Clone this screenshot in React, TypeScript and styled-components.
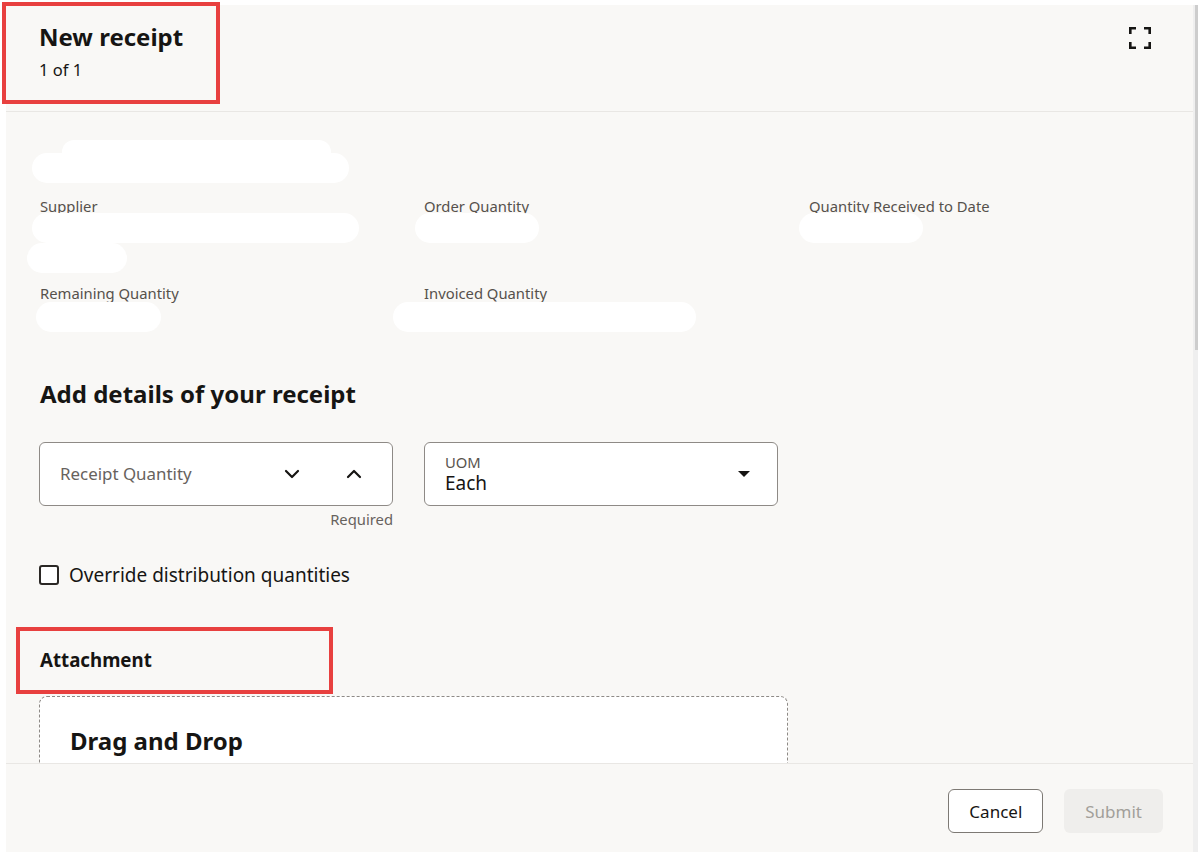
import styled, { createGlobalStyle } from "styled-components";

const GlobalStyle = createGlobalStyle`
  * { box-sizing: border-box; }
  html, body {
    margin: 0;
    padding: 0;
    background: #ffffff;
    font-family: "Noto Sans", "Open Sans", Arial, sans-serif;
    color: #161513;
  }
`;

const Page = styled.div`
  position: relative;
  display: flex;
  height: 852px;
  padding: 5px 0 0 6px;
  overflow: hidden;
`;

const Panel = styled.div`
  flex: 1;
  display: flex;
  flex-direction: column;
  background: #f9f8f6;
  min-width: 0;
`;

const ScrollTrack = styled.div`
  width: 5px;
  background: #efefef;
  display: flex;
  justify-content: flex-end;
`;

const ScrollThumb = styled.div`
  width: 3px;
  height: 345px;
  background: #cdcdcd;
`;

const Header = styled.header`
  height: 107px;
  flex-shrink: 0;
  display: flex;
  justify-content: space-between;
  align-items: flex-start;
  padding: 16px 42px 0 33px;
  border-bottom: 1px solid #e9e7e4;
`;

const Title = styled.h1`
  margin: 0;
  font-size: 24px;
  line-height: 32px;
  font-weight: 700;
`;

const SubTitle = styled.div`
  margin-top: 5px;
  font-size: 16.5px;
  line-height: 24px;
`;

const IconButton = styled.button`
  margin-top: 6px;
  width: 22px;
  height: 22px;
  padding: 0;
  border: 0;
  background: none;
  color: #161513;
`;

const Body = styled.main`
  flex: 1;
  overflow: hidden;
  padding: 18px 38px 0 33px;
`;

const Field = styled.div<{ $h: number }>`
  position: relative;
  height: ${(p) => p.$h}px;
  padding-left: 1px;
`;

const Grid = styled.div`
  display: grid;
  grid-template-columns: 384px 385px 1fr;
`;

const Label = styled.div`
  margin-top: -1px;
  font-size: 14.8px;
  line-height: 20px;
  color: #56514c;
`;

const Redact = styled.div<{ $x: number; $y: number; $w: number; $h?: number }>`
  position: absolute;
  left: ${(p) => p.$x}px;
  top: ${(p) => p.$y}px;
  width: ${(p) => p.$w}px;
  height: ${(p) => p.$h ?? 30}px;
  background: #ffffff;
  border-radius: 15px;
`;

const Heading = styled.h2`
  margin: 7px 0 0;
  padding-left: 1px;
  font-size: 24px;
  line-height: 32px;
  font-weight: 700;
`;

const InputRow = styled.div`
  display: flex;
  gap: 31px;
  margin-top: 32px;
`;

const InputCol = styled.div`
  width: 354px;
  display: flex;
  flex-direction: column;
  align-items: flex-end;
`;

const InputBox = styled.div`
  width: 100%;
  height: 64px;
  background: #ffffff;
  border: 1px solid #8e8a86;
  border-radius: 6px;
  display: flex;
  align-items: center;
  padding: 0 20px 0 20px;
`;

const Placeholder = styled.div`
  flex: 1;
  margin-top: -1px;
  font-size: 16.9px;
  color: #67625d;
`;

const Stepper = styled.div`
  display: flex;
  gap: 46px;
  margin-right: 10px;
  color: #161513;
`;

const SelectText = styled.div`
  flex: 1;
  display: flex;
  flex-direction: column;
`;

const SelectLabel = styled.div`
  font-size: 14.8px;
  line-height: 18px;
  color: #58534d;
`;

const SelectValue = styled.div`
  font-size: 19px;
  line-height: 24px;
`;

const Caret = styled.div`
  width: 0;
  height: 0;
  border-left: 6px solid transparent;
  border-right: 6px solid transparent;
  border-top: 6px solid #161513;
  margin-right: 7px;
`;

const Hint = styled.div`
  margin-top: 3px;
  font-size: 14.8px;
  line-height: 20px;
  color: #67625d;
`;

const CheckRow = styled.label`
  margin-top: 34px;
  display: flex;
  align-items: center;
  gap: 10px;
  font-size: 19px;
  line-height: 24px;
`;

const CheckBox = styled.span`
  width: 20px;
  height: 20px;
  border: 2px solid #2b2825;
  border-radius: 3px;
  background: #ffffff;
`;

const SectionTitle = styled.h3`
  margin: 61px 0 0;
  padding-left: 1px;
  font-size: 18.7px;
  line-height: 24px;
  font-weight: 700;
`;

const DropZone = styled.div`
  margin-top: 24px;
  width: 749px;
  height: 120px;
  background: #ffffff;
  border: 1px dashed #8e8a86;
  border-radius: 8px;
  padding: 28px 0 0 30px;
`;

const DropTitle = styled.div`
  font-size: 24px;
  line-height: 32px;
  font-weight: 700;
`;

const Footer = styled.footer`
  height: 89px;
  flex-shrink: 0;
  border-top: 1px solid #e9e7e4;
  display: flex;
  justify-content: flex-end;
  align-items: flex-start;
  gap: 21px;
  padding: 25px 30px 0 0;
  background: #f9f8f6;
`;

const Button = styled.button<{ $disabled?: boolean }>`
  height: 44px;
  padding: 0 20px;
  border-radius: 6px;
  font-family: inherit;
  font-size: 17px;
  border: 1px solid ${(p) => (p.$disabled ? "transparent" : "#7d7974")};
  background: ${(p) => (p.$disabled ? "#efeeec" : "#ffffff")};
  color: ${(p) => (p.$disabled ? "#a29f9a" : "#161513")};
`;

const Marker = styled.div<{ $x: number; $y: number; $w: number; $h: number }>`
  position: absolute;
  left: ${(p) => p.$x}px;
  top: ${(p) => p.$y}px;
  width: ${(p) => p.$w}px;
  height: ${(p) => p.$h}px;
  border: 4px solid #e8403f;
  pointer-events: none;
`;

const Chevron = ({ up }: { up?: boolean }) => (
  <svg width="16" height="10" viewBox="0 0 16 10" fill="none">
    <polyline
      points={up ? "2,8 8,2 14,8" : "2,2 8,8 14,2"}
      stroke="currentColor"
      strokeWidth="2.2"
      strokeLinecap="round"
      strokeLinejoin="round"
    />
  </svg>
);

const ExpandIcon = () => (
  <svg width="22" height="22" viewBox="0 0 22 22" fill="none" stroke="currentColor" strokeWidth="2.6">
    <path d="M1.3 7V1.3H7" />
    <path d="M15 1.3h5.7V7" />
    <path d="M20.7 15v5.7H15" />
    <path d="M7 20.7H1.3V15" />
  </svg>
);

export default function App() {
  return (
    <>
      <GlobalStyle />
      <Page>
        <Panel>
          <Header>
            <div>
              <Title>New receipt</Title>
              <SubTitle>1 of 1</SubTitle>
            </div>
            <IconButton aria-label="Maximize">
              <ExpandIcon />
            </IconButton>
          </Header>

          <Body>
            <Field $h={67}>
              <Redact $x={23} $y={10} $w={269} $h={24} />
              <Redact $x={-7} $y={23} $w={317} />
            </Field>

            <Grid>
              <Field $h={87}>
                <Label>Supplier</Label>
                <Redact $x={-7} $y={16} $w={327} />
                <Redact $x={-12} $y={46} $w={100} />
              </Field>
              <Field $h={87}>
                <Label>Order Quantity</Label>
                <Redact $x={-8} $y={16} $w={124} />
              </Field>
              <Field $h={87}>
                <Label>Quantity Received to Date</Label>
                <Redact $x={-9} $y={16} $w={124} />
              </Field>
              <Field $h={87}>
                <Label>Remaining Quantity</Label>
                <Redact $x={-3} $y={18} $w={125} />
              </Field>
              <Field $h={87}>
                <Label>Invoiced Quantity</Label>
                <Redact $x={-30} $y={18} $w={303} />
              </Field>
            </Grid>

            <Heading>Add details of your receipt</Heading>

            <InputRow>
              <InputCol>
                <InputBox>
                  <Placeholder>Receipt Quantity</Placeholder>
                  <Stepper>
                    <Chevron />
                    <Chevron up />
                  </Stepper>
                </InputBox>
                <Hint>Required</Hint>
              </InputCol>
              <InputCol>
                <InputBox>
                  <SelectText>
                    <SelectLabel>UOM</SelectLabel>
                    <SelectValue>Each</SelectValue>
                  </SelectText>
                  <Caret />
                </InputBox>
              </InputCol>
            </InputRow>

            <CheckRow>
              <CheckBox />
              Override distribution quantities
            </CheckRow>

            <SectionTitle>Attachment</SectionTitle>

            <DropZone>
              <DropTitle>Drag and Drop</DropTitle>
            </DropZone>
          </Body>

          <Footer>
            <Button>Cancel</Button>
            <Button $disabled>Submit</Button>
          </Footer>
        </Panel>
        <ScrollTrack>
          <ScrollThumb />
        </ScrollTrack>

        <Marker $x={2} $y={2} $w={218} $h={102} />
        <Marker $x={16} $y={627} $w={317} $h={67} />
      </Page>
    </>
  );
}
